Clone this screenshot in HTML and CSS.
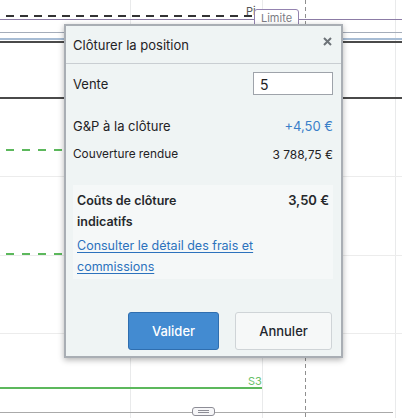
FILE: index.html
```html
<!DOCTYPE html>
<html lang="fr">
<head>
<meta charset="utf-8">
<title>Clôturer la position</title>
<link rel="stylesheet" href="styles.css">
</head>
<body>
<div class="chart">
  <!-- grid -->
  <div class="vgrid" style="left:130px"></div>
  <div class="vgrid" style="left:262px"></div>
  <div class="vgrid" style="left:395px"></div>
  <div class="vdash" style="left:305px"></div>
  <div class="hgrid" style="top:176px"></div>
  <div class="hgrid" style="top:255px"></div>
  <div class="hgrid" style="top:333px"></div>

  <!-- price levels -->
  <div class="level dash-black" style="top:15px"></div>
  <span class="level-label pivot">Pi</span>
  <div class="level purple" style="top:19px"></div>
  <span class="order-tag">Limite</span>
  <div class="level slate" style="top:32px"></div>
  <div class="level lightblue" style="top:38px"></div>
  <div class="level dark" style="top:41px"></div>
  <div class="level dark" style="top:97px"></div>
  <div class="level dash-green" style="top:149px"></div>
  <div class="level dash-green" style="top:253px"></div>
  <div class="level green" style="top:387px"></div>
  <span class="level-label s3">S3</span>

  <!-- time axis -->
  <div class="axis"></div>
  <div class="axis-handle"><span></span><span></span></div>
</div>

<div class="dialog" role="dialog">
  <header class="dialog-head">
    <h1 class="dialog-title">Clôturer la position</h1>
    <button class="close" aria-label="Fermer">
      <svg width="9" height="9" viewBox="0 0 9 9"><path d="M1 1L8 8M8 1L1 8" stroke="#6d7378" stroke-width="2"/></svg>
    </button>
  </header>
  <div class="dialog-body">
    <div class="row row-qty">
      <label class="label-lg" for="qty">Vente</label>
      <input id="qty" class="qty" type="text" value="5">
    </div>
    <div class="row row-pnl">
      <span class="label-lg">G&amp;P à la clôture</span>
      <span class="value-lg positive">+4,50 €</span>
    </div>
    <div class="row row-cover">
      <span class="label-sm">Couverture rendue</span>
      <span class="value-sm">3 788,75 €</span>
    </div>
    <div class="costs">
      <div class="costs-top">
        <span class="costs-title">Coûts de clôture<br>indicatifs</span>
        <span class="costs-value">3,50 €</span>
      </div>
      <a class="costs-link" href="#">Consulter le détail des frais et<br>commissions</a>
    </div>
    <div class="actions">
      <button class="btn btn-primary">Valider</button>
      <button class="btn btn-secondary">Annuler</button>
    </div>
  </div>
</div>
</body>
</html>
```

FILE: styles.css
```css
* { box-sizing: border-box; }

html, body {
  margin: 0;
  padding: 0;
}

body {
  width: 402px;
  height: 418px;
  overflow: hidden;
  position: relative;
  background: #ffffff;
  font-family: Inter, "Noto Sans", sans-serif;
  color: #222629;
}

/* chart canvas */
.chart {
  position: absolute;
  inset: 0;
}

.vgrid {
  position: absolute;
  top: 0;
  bottom: 0;
  width: 1px;
  background: #e9eaeb;
}

.vdash {
  position: absolute;
  top: 0;
  bottom: 0;
  width: 1px;
  background: repeating-linear-gradient(to bottom, #8f8f8f 0 4px, transparent 4px 7px);
}

.hgrid {
  position: absolute;
  left: 0;
  right: 0;
  height: 1px;
  background: #ececec;
}

.level {
  position: absolute;
  left: 0;
  right: 0;
  height: 2px;
}

.dash-black {
  left: 6px;
  right: 150px;
  background: repeating-linear-gradient(to right, #333 0 8px, transparent 8px 14px);
}

.purple { height: 1px; background: #8c7ca6; }
.slate { height: 1px; background: #a5adba; }
.lightblue { background: #a7bcd4; }
.dark { background: #4a4a4a; }

.dash-green {
  left: 6px;
  right: 60px;
  background: repeating-linear-gradient(to right, #5cb85c 0 8px, transparent 8px 16px);
}

.green {
  right: 140px;
  background: #5cb85c;
}

.level-label {
  position: absolute;
  font-size: 11px;
  line-height: 12px;
}

.pivot {
  left: 246px;
  top: 5px;
  color: #555;
}

.s3 {
  left: 248px;
  top: 375px;
  color: #6abf6a;
}

.order-tag {
  position: absolute;
  left: 254px;
  top: 9px;
  width: 45px;
  height: 18px;
  padding-top: 2px;
  text-align: center;
  font-size: 11px;
  line-height: 12px;
  color: #7c7c84;
  background: #fff;
  border: 1px solid #9483b0;
  border-radius: 3px 3px 0 0;
}

.axis {
  position: absolute;
  left: 0;
  width: 393px;
  top: 412px;
  height: 1px;
  background: #aaaaaa;
}

.axis-handle {
  position: absolute;
  left: 192px;
  top: 407px;
  width: 23px;
  height: 9px;
  background: #f6f6f8;
  border: 1px solid #8d8d96;
  border-radius: 3px;
  display: flex;
  flex-direction: column;
  align-items: center;
  justify-content: center;
  gap: 1px;
}

.axis-handle span {
  width: 11px;
  height: 1px;
  background: #8d8d96;
}

/* dialog */
.dialog {
  position: absolute;
  left: 64px;
  top: 24px;
  width: 279px;
  height: 334px;
  background: #eff4f4;
  border: 2px solid #a9aeb4;
  box-shadow: 0 2px 6px rgba(0, 0, 0, 0.3);
  display: flex;
  flex-direction: column;
}

.dialog-head {
  height: 38px;
  flex: none;
  display: flex;
  align-items: center;
  justify-content: space-between;
  padding: 0 9px 0 7px;
  border-bottom: 1px solid #c9ced2;
}

.dialog-title {
  margin: 0;
  font-size: 13px;
  font-weight: 400;
  color: #1f2225;
}

.close {
  border: 0;
  background: none;
  padding: 0;
  width: 9px;
  height: 9px;
  display: flex;
  margin-top: -6px;
}

.dialog-body {
  flex: 1;
  padding: 8px 8px 0 7px;
  display: flex;
  flex-direction: column;
}

.row {
  display: flex;
  align-items: center;
  justify-content: space-between;
}

.row-qty { height: 23px; }
.row-pnl { margin-top: 22px; height: 18px; }
.row-cover { margin-top: 10px; height: 18px; }

.label-lg { font-size: 13px; color: #1f2225; }
.value-lg { font-size: 13px; }
.label-sm { font-size: 11.8px; color: #1f2225; }
.value-sm { font-size: 12px; color: #1f2225; }

.positive { color: #3a7fc9; }

.qty {
  width: 80px;
  height: 23px;
  border: 1px solid #9ea3aa;
  background: #ffffff;
  font-family: inherit;
  font-size: 14px;
  color: #222;
  padding: 1px 0 0 6px;
  outline: none;
}

.costs {
  margin-top: 22px;
  background: #f5f8f8;
  padding: 5px 4px 2px 4px;
  width: 260px;
  height: 94px;
  font-size: 12.5px;
  line-height: 21px;
}

.costs-top {
  display: flex;
  justify-content: space-between;
  align-items: flex-start;
}

.costs-title,
.costs-value {
  font-weight: 600;
  color: #26292c;
}

.costs-value { font-size: 13px; }

.costs-link {
  display: block;
  margin-top: 3px;
  color: #2c72bd;
  text-decoration: underline;
  text-underline-offset: 2px;
}

.actions {
  margin-top: 33px;
  display: flex;
  justify-content: flex-end;
  gap: 16px;
  padding-right: 1px;
}

.btn {
  height: 38px;
  border-radius: 3px;
  font-family: inherit;
  font-size: 13px;
  font-weight: 500;
}

.btn-primary {
  width: 91px;
  background: #438bd1;
  border: 1px solid #2f6eaf;
  color: #ffffff;
}

.btn-secondary {
  width: 97px;
  background: #f6f8f8;
  border: 1px solid #cfd4d7;
  color: #22262e;
}
```
